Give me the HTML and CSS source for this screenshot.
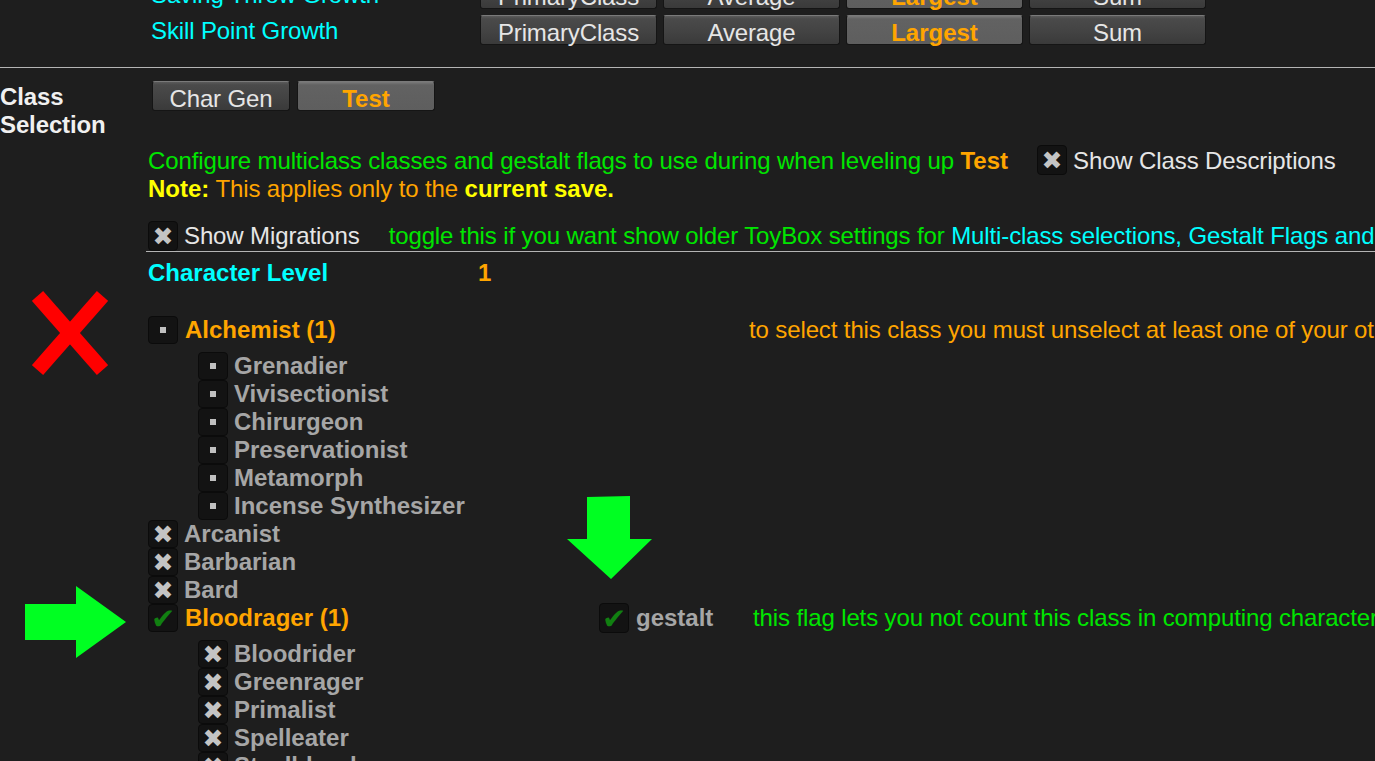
FILE: index.html
```html
<!DOCTYPE html>
<html lang="en">
<head>
    <meta charset="UTF-8">
    <meta name="viewport" content="width=device-width, initial-scale=1.0">
    <title>ToyBox - Class Selection</title>
    <link rel="stylesheet" href="styles.css">
</head>
<body>
    <div class="settings">
        <div class="setting-row">
            <span class="setting-label">Saving Throw Growth</span>
            <div class="toggle-group">
                <button class="btn">PrimaryClass</button>
                <button class="btn">Average</button>
                <button class="btn selected">Largest</button>
                <button class="btn">Sum</button>
            </div>
        </div>
        <div class="setting-row">
            <span class="setting-label">Skill Point Growth</span>
            <div class="toggle-group">
                <button class="btn">PrimaryClass</button>
                <button class="btn">Average</button>
                <button class="btn selected">Largest</button>
                <button class="btn">Sum</button>
            </div>
        </div>
    </div>

    <hr class="divider">

    <div class="section">
        <div class="section-title">Class<br>Selection</div>

        <div class="section-body">
            <div class="tabs">
                <button class="btn tab">Char Gen</button>
                <button class="btn tab selected">Test</button>
            </div>

            <div class="intro-row">
                <span class="green intro-text">Configure multiclass classes and gestalt flags to use during when leveling up <b class="orange">Test</b></span>
                <label class="toggle"><span class="box"><span class="cross">&#10006;</span></span><span class="toggle-text">Show Class Descriptions</span></label>
            </div>
            <div class="note"><b class="yellow">Note:</b> <span class="orange">This applies only to the</span> <b class="yellow">current save.</b></div>

            <div class="migrations-row">
                <label class="toggle"><span class="box"><span class="cross">&#10006;</span></span><span class="toggle-text">Show Migrations</span></label>
                <span class="green">toggle this if you want show older ToyBox settings for <span class="cyan">Multi-class selections, Gestalt Flags and Multi-class Toggles</span></span>
            </div>

            <hr class="divider short">

            <div class="level-row">
                <b class="cyan level-label">Character Level</b>
                <b class="orange">1</b>
            </div>

            <div class="class-list">
                <div class="class-row parent">
                    <span class="box"><span class="dot"></span></span>
                    <b class="class-name orange">Alchemist (1)</b>
                    <span class="flag-slot"></span>
                    <span class="orange">to select this class you must unselect at least one of your other existing classes</span>
                </div>
                <div class="sub-list">
                    <div class="class-row"><span class="box"><span class="dot"></span></span><b class="class-name">Grenadier</b></div>
                    <div class="class-row"><span class="box"><span class="dot"></span></span><b class="class-name">Vivisectionist</b></div>
                    <div class="class-row"><span class="box"><span class="dot"></span></span><b class="class-name">Chirurgeon</b></div>
                    <div class="class-row"><span class="box"><span class="dot"></span></span><b class="class-name">Preservationist</b></div>
                    <div class="class-row"><span class="box"><span class="dot"></span></span><b class="class-name">Metamorph</b></div>
                    <div class="class-row"><span class="box"><span class="dot"></span></span><b class="class-name">Incense Synthesizer</b></div>
                </div>

                <div class="class-row"><span class="box"><span class="cross">&#10006;</span></span><b class="class-name">Arcanist</b></div>
                <div class="class-row"><span class="box"><span class="cross">&#10006;</span></span><b class="class-name">Barbarian</b></div>
                <div class="class-row"><span class="box"><span class="cross">&#10006;</span></span><b class="class-name">Bard</b></div>

                <div class="class-row parent">
                    <span class="box"><span class="check">&#10004;</span></span>
                    <b class="class-name orange">Bloodrager (1)</b>
                    <span class="flag-slot">
                        <span class="box tall"><span class="check">&#10004;</span></span>
                        <b class="flag-name">gestalt</b>
                    </span>
                    <span class="green flag-note">this flag lets you not count this class in computing character level</span>
                </div>
                <div class="sub-list">
                    <div class="class-row"><span class="box"><span class="cross">&#10006;</span></span><b class="class-name">Bloodrider</b></div>
                    <div class="class-row"><span class="box"><span class="cross">&#10006;</span></span><b class="class-name">Greenrager</b></div>
                    <div class="class-row"><span class="box"><span class="cross">&#10006;</span></span><b class="class-name">Primalist</b></div>
                    <div class="class-row"><span class="box"><span class="cross">&#10006;</span></span><b class="class-name">Spelleater</b></div>
                    <div class="class-row"><span class="box"><span class="cross">&#10006;</span></span><b class="class-name">Steelblood</b></div>
                </div>
            </div>
        </div>

        <!-- annotation marks drawn over the screenshot -->
        <svg class="mark red-x" width="76" height="84" viewBox="0 0 76 84">
            <line x1="5.5" y1="5" x2="70.5" y2="79" stroke="#ff0000" stroke-width="15"/>
            <line x1="70.5" y1="5" x2="5.5" y2="79" stroke="#ff0000" stroke-width="15"/>
        </svg>
        <svg class="mark arrow-right" width="101" height="73" viewBox="0 0 101 73">
            <polygon points="0,18 51,18 51,0 101,36 51,72 51,54 0,54" fill="#00ff22"/>
        </svg>
        <svg class="mark arrow-down" width="86" height="84" viewBox="0 0 86 84">
            <polygon points="20,1 63,0 63,43 85,43 44,83 0,43 20,43" fill="#00ff22"/>
        </svg>
    </div>
</body>
</html>
```

FILE: styles.css
```css
body {
    margin: 0;
    background-color: #1e1e1e;
    color: #e0e0e0;
    font-family: "Liberation Sans", Arial, sans-serif;
    font-size: 24px;
    line-height: 28px;
    letter-spacing: -0.12px;
    overflow: hidden;
    white-space: nowrap;
}

b {
    font-weight: bold;
    letter-spacing: 0;
}

.green { color: #00e600; }
.orange { color: #ffa500; }
.yellow { color: #ffff00; }
.cyan { color: #00ffff; }

/* top settings */
.settings {
    margin-top: -21px;
    display: flex;
    flex-direction: column;
    gap: 6px;
    padding-left: 151px;
}

.setting-row {
    display: flex;
    align-items: center;
    height: 30px;
}

.setting-label {
    width: 329px;
    padding-top: 2px;
    color: #00ffff;
}

.toggle-group {
    display: flex;
    gap: 6px;
}

.btn {
    box-sizing: border-box;
    width: 177px;
    height: 30px;
    padding: 4px 0 0;
    font-family: "Liberation Sans", Arial, sans-serif;
    font-size: 24px;
    line-height: 26px;
    letter-spacing: -0.12px;
    color: #e6e6e6;
    background: linear-gradient(#5a5a5a 0, #4a4a4a 3px, #444 50%, #3a3a3a 100%);
    border: 1px solid #151515;
    border-top-color: #7a7a7a;
    border-radius: 3px;
}

.btn.selected {
    background: linear-gradient(#7a7a7a 0, #626262 3px, #5e5e5e 100%);
    color: #ffa500;
    font-weight: bold;
    letter-spacing: 0;
}

.divider {
    border: none;
    border-top: 1px solid #b4b4b4;
    height: 0;
    margin: 22px 0 0;
}

.divider.short {
    margin: 0 0 0 -2px;
}

/* class selection section */
.section {
    position: relative;
    display: flex;
    padding-top: 13px;
}

.section-title {
    width: 148px;
    margin-top: 2px;
    font-weight: bold;
    color: #f0f0f0;
}

.section-body {
    flex: 1;
    min-width: 0;
}

.tabs {
    display: flex;
    gap: 7px;
    margin-left: 4px;
}

.btn.tab {
    width: 138px;
}

.intro-row {
    display: flex;
    align-items: center;
    gap: 29px;
    height: 30px;
    margin-top: 34px;
}

.intro-text {
    padding-top: 2px;
}

.toggle {
    display: flex;
    align-items: center;
    gap: 6px;
}

.toggle-text {
    color: #e6e6e6;
}

.intro-row .toggle-text {
    padding-top: 1px;
}

.box {
    box-sizing: border-box;
    width: 30px;
    height: 30px;
    display: flex;
    align-items: center;
    justify-content: center;
    flex-shrink: 0;
    background-color: #131313;
    border: 1px solid #0b0b0b;
    border-radius: 4px;
}

.cross {
    font-family: "DejaVu Sans", sans-serif;
    font-size: 25px;
    line-height: 1;
    color: #c4c4c4;
}

.check {
    font-family: "DejaVu Sans", sans-serif;
    font-size: 29px;
    line-height: 1;
    margin-top: 3px;
    color: #118011;
}

.dot {
    width: 6px;
    height: 6px;
    background-color: #c0c0c0;
}

.note {
    height: 28px;
}

.migrations-row {
    display: flex;
    align-items: center;
    gap: 29px;
    height: 30px;
    margin-top: 18px;
}

.level-row {
    display: flex;
    margin-top: 7px;
}

.level-label {
    width: 330px;
}

/* class list */
.class-list {
    margin-top: 29px;
}

.class-row {
    display: flex;
    align-items: center;
    height: 28px;
}

.class-row > * {
    flex-shrink: 0;
}

.class-row .box {
    height: 28px;
}

.class-row .box.tall {
    height: 30px;
}

.class-name {
    margin-left: 6px;
    color: #a6a6a6;
}

.class-row.parent .class-name {
    width: 414px;
    margin-left: 7px;
    color: #ffa500;
}

.flag-slot {
    display: flex;
    align-items: center;
    width: 150px;
}

.flag-name {
    margin-left: 7px;
    color: #a6a6a6;
}

.flag-note {
    margin-left: 4px;
}

.sub-list {
    padding-left: 50px;
    margin-top: 8px;
}

.mark {
    position: absolute;
    display: block;
}

.red-x {
    left: 32px;
    top: 223px;
}

.arrow-right {
    left: 25px;
    top: 518px;
}

.arrow-down {
    left: 567px;
    top: 428px;
}
```
